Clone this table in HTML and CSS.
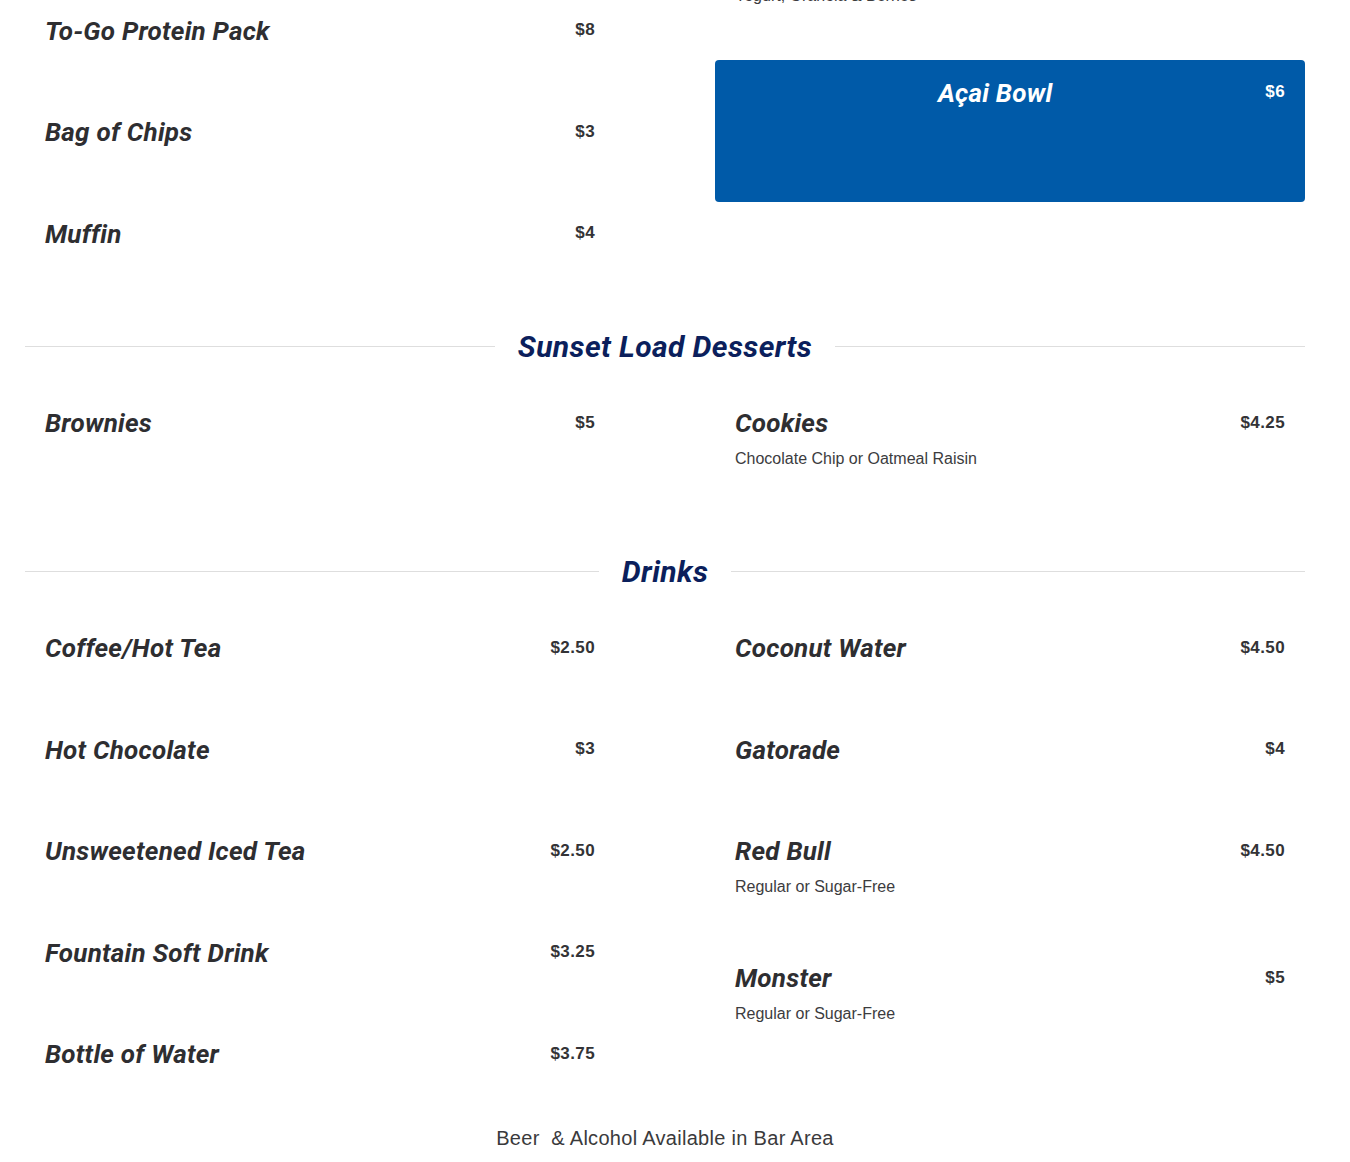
FILE: index.html
```html
<!DOCTYPE html>
<html lang="en">
<head>
<meta charset="utf-8">
<title>Menu</title>
<link rel="stylesheet" href="styles.css">
</head>
<body>
<main class="menu">
  <section class="menu-grid menu-grid--first">
    <div class="menu-col menu-col--offset">
      <div class="item"><div class="item-head"><h3 class="item-name">To-Go Protein Pack</h3><span class="item-price">$8</span></div></div>
      <div class="item"><div class="item-head"><h3 class="item-name">Bag of Chips</h3><span class="item-price">$3</span></div></div>
      <div class="item"><div class="item-head"><h3 class="item-name">Muffin</h3><span class="item-price">$4</span></div></div>
    </div>
    <div class="menu-col menu-col--nudge">
      <div class="item"><div class="item-head"><h3 class="item-name">Yogurt Parfait</h3><span class="item-price">$6</span></div><p class="item-desc">Yogurt, Granola &amp; Berries</p></div>
      <div class="item item--featured"><div class="item-head"><h3 class="item-name">Açai Bowl</h3><span class="item-price">$6</span></div></div>
    </div>
  </section>

  <header class="section-head"><span class="rule"></span><h2 class="section-title">Sunset Load Desserts</h2><span class="rule"></span></header>
  <section class="menu-grid menu-grid--spaced">
    <div class="menu-col">
      <div class="item"><div class="item-head"><h3 class="item-name">Brownies</h3><span class="item-price">$5</span></div></div>
    </div>
    <div class="menu-col">
      <div class="item"><div class="item-head"><h3 class="item-name">Cookies</h3><span class="item-price">$4.25</span></div><p class="item-desc">Chocolate Chip or Oatmeal Raisin</p></div>
    </div>
  </section>

  <header class="section-head"><span class="rule"></span><h2 class="section-title">Drinks</h2><span class="rule"></span></header>
  <section class="menu-grid">
    <div class="menu-col">
      <div class="item"><div class="item-head"><h3 class="item-name">Coffee/Hot Tea</h3><span class="item-price">$2.50</span></div></div>
      <div class="item"><div class="item-head"><h3 class="item-name">Hot Chocolate</h3><span class="item-price">$3</span></div></div>
      <div class="item"><div class="item-head"><h3 class="item-name">Unsweetened Iced Tea</h3><span class="item-price">$2.50</span></div></div>
      <div class="item"><div class="item-head"><h3 class="item-name">Fountain Soft Drink</h3><span class="item-price">$3.25</span></div></div>
      <div class="item"><div class="item-head"><h3 class="item-name">Bottle of Water</h3><span class="item-price">$3.75</span></div></div>
    </div>
    <div class="menu-col">
      <div class="item"><div class="item-head"><h3 class="item-name">Coconut Water</h3><span class="item-price">$4.50</span></div></div>
      <div class="item"><div class="item-head"><h3 class="item-name">Gatorade</h3><span class="item-price">$4</span></div></div>
      <div class="item"><div class="item-head"><h3 class="item-name">Red Bull</h3><span class="item-price">$4.50</span></div><p class="item-desc">Regular or Sugar-Free</p></div>
      <div class="item"><div class="item-head"><h3 class="item-name">Monster</h3><span class="item-price">$5</span></div><p class="item-desc">Regular or Sugar-Free</p></div>
    </div>
  </section>

  <p class="menu-note">Beer&nbsp; &amp; Alcohol Available in Bar Area</p>
</main>
</body>
</html>
```

FILE: styles.css
```css
* { box-sizing: border-box; }

html, body {
  margin: 0;
  padding: 0;
  background: #ffffff;
}

body {
  font-family: "Liberation Sans", Arial, sans-serif;
  color: #333333;
}

.menu {
  width: 1280px;
  margin: -72px 0 0 25px;
}

.menu-grid {
  display: grid;
  grid-template-columns: 590px 590px;
  column-gap: 100px;
  align-items: start;
}

.menu-grid--spaced {
  padding-bottom: 10px;
}

.menu-col--offset {
  padding-top: 70px;
}

.menu-col--nudge .item:first-child {
  padding-bottom: 51.5px;
}

.item {
  padding: 20px 20px 46.5px;
}

.item-head {
  display: flex;
  align-items: center;
  justify-content: space-between;
  gap: 10px;
  height: 24px;
  margin-bottom: 11px;
}

.item-name {
  margin: 0;
  padding-top: 1px;
  font-family: Roboto, "Liberation Sans", Arial, sans-serif;
  font-style: italic;
  font-weight: 700;
  font-size: 26px;
  line-height: 24px;
  letter-spacing: 0.25px;
  color: #2e2e31;
  white-space: nowrap;
}

.item-price {
  font-family: "Liberation Sans", Arial, sans-serif;
  font-weight: 700;
  font-size: 17px;
  line-height: 24px;
  letter-spacing: 0.4px;
  color: #333336;
}

.item-desc {
  margin: 0;
  font-size: 16px;
  line-height: 25.6px;
  color: #3c3c3e;
}

.item--featured {
  background: #005aa8;
  border-radius: 4px;
  padding-bottom: 87px;
}

.item--featured .item-name {
  flex: 1;
  text-align: center;
  color: #ffffff;
}

.item--featured .item-price {
  color: #ffffff;
}

.section-head {
  display: flex;
  align-items: center;
  gap: 23px;
  padding: 26px 0;
}

.rule {
  flex: 1;
  height: 1px;
  background: #dedede;
}

.section-title {
  margin: 0;
  font-family: Roboto, "Liberation Sans", Arial, sans-serif;
  font-style: italic;
  font-weight: 700;
  font-size: 30px;
  line-height: 36px;
  letter-spacing: 0.4px;
  color: #0b1f5c;
  white-space: nowrap;
}

.menu-note {
  margin: 0;
  text-align: center;
  font-size: 20px;
  line-height: 31px;
  letter-spacing: 0.3px;
  color: #3a3a3c;
}
```
